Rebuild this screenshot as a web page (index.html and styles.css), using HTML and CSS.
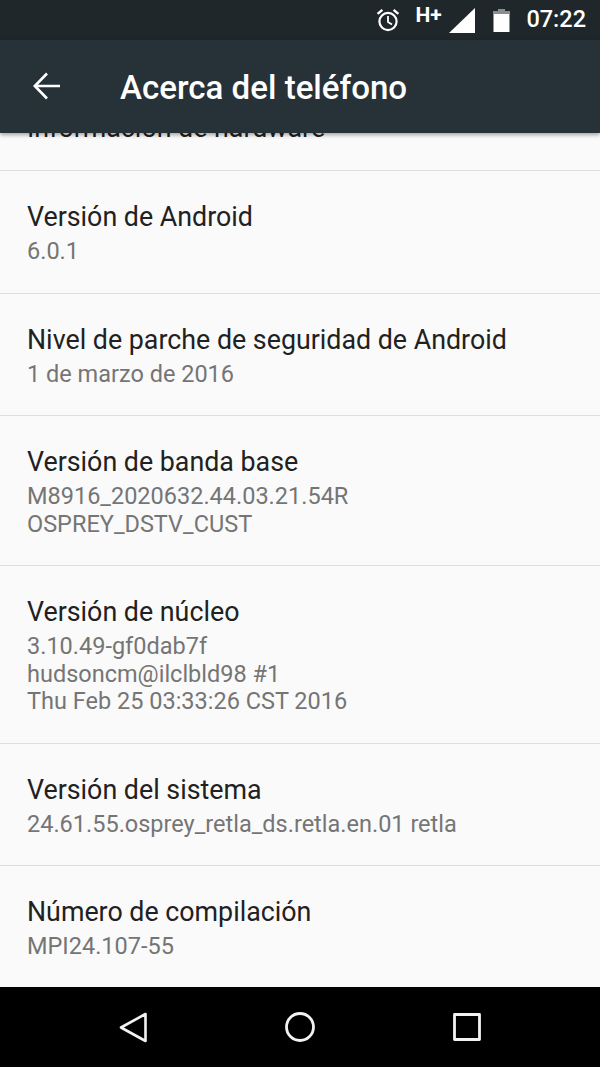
FILE: index.html
```html
<!DOCTYPE html>
<html lang="es">
<head>
<meta charset="utf-8">
<title>Acerca del teléfono</title>
<link rel="stylesheet" href="styles.css">
</head>
<body>
<div class="screen">
  <div class="status">
    <svg class="ic-alarm" width="26" height="26" viewBox="0 0 26 26" fill="none" stroke="#fff">
      <circle cx="13" cy="14.500" r="8.600" stroke-width="2.200"/>
      <path d="M13 9v6l4 2.600" stroke-width="1.800"/>
      <path d="M2.600 6.800 7.400 2.800M23.400 6.800 18.600 2.800" stroke-width="2.400"/>
    </svg>
    <span class="hplus">H+</span>
    <svg class="ic-signal" width="26" height="25" viewBox="0 0 26 25"><path d="M26 0v25H0z" fill="#fff"/></svg>
    <svg class="ic-batt" width="17" height="23" viewBox="0 0 17 23"><path d="M5.500 0h6v2h5v21H.5V2h5z" fill="#fff"/><path d="M5.500 0h6v2h5v3H.5V2h5z" fill="#8a8d8f"/></svg>
    <span class="clock">07:22</span>
  </div>
  <header class="appbar">
    <svg class="ic-back" width="28" height="28" viewBox="0 0 28 28" fill="none" stroke="#fff" stroke-width="2.600"><path d="M27 14H2M14 1.500 1.800 14 14 26.500"/></svg>
    <h1 class="title">Acerca del teléfono</h1>
  </header>
  <main class="list">
    <div class="row row-clipped"><div class="name">Información de hardware</div></div>
    <div class="row"><div class="name">Versión de Android</div><div class="val">6.0.1</div></div>
    <div class="row"><div class="name">Nivel de parche de seguridad de Android</div><div class="val">1 de marzo de 2016</div></div>
    <div class="row"><div class="name">Versión de banda base</div><div class="val">M8916_2020632.44.03.21.54R<br>OSPREY_DSTV_CUST</div></div>
    <div class="row"><div class="name">Versión de núcleo</div><div class="val">3.10.49-gf0dab7f<br>hudsoncm@ilclbld98 #1<br>Thu Feb 25 03:33:26 CST 2016</div></div>
    <div class="row"><div class="name">Versión del sistema</div><div class="val">24.61.55.osprey_retla_ds.retla.en.01 retla</div></div>
    <div class="row row-last"><div class="name">Número de compilación</div><div class="val">MPI24.107-55</div></div>
  </main>
  <nav class="navbar">
    <svg width="28" height="31" viewBox="0 0 28 31" fill="none" stroke="#f2f2f2" stroke-width="2.600" stroke-linejoin="round"><path d="M26.500 2v27L2 15.500z"/></svg>
    <svg width="30" height="30" viewBox="0 0 30 30" fill="none" stroke="#f2f2f2" stroke-width="2.800"><circle cx="15" cy="15" r="13.500"/></svg>
    <svg width="28" height="28" viewBox="0 0 28 28" fill="none" stroke="#f2f2f2" stroke-width="2.800" stroke-linejoin="round"><rect x="1.500" y="1.500" width="25" height="25"/></svg>
  </nav>
</div>
</body>
</html>
```
FILE: styles.css
```css
* { box-sizing: border-box; }
html, body { margin: 0; padding: 0; }
body { font-family: Roboto, "Liberation Sans", sans-serif; background: #fafafa; }
.screen { width: 600px; height: 1067px; display: flex; flex-direction: column; overflow: hidden; background: #fafafa; }

.status { flex: 0 0 40px; background: #20272b; display: flex; align-items: center; justify-content: flex-end; color: #fff; padding-right: 14px; }
.ic-alarm { margin-right: 14px; margin-top: -1px; flex: none; }
.hplus { font-size: 21px; font-weight: 700; margin-right: 6px; margin-top: -10px; line-height: 1; width: 28px; white-space: nowrap; }
.ic-signal { margin-right: 18px; margin-top: 1px; flex: none; }
.ic-batt { margin-right: 16px; flex: none; }
.clock { font-size: 23.500px; font-weight: 500; line-height: 1; }

.appbar { flex: 0 0 93px; background: #263238; display: flex; align-items: center; padding-left: 33px; position: relative; z-index: 2; box-shadow: 0 2px 4px rgba(0,0,0,.35); }
.ic-back { flex: none; margin-right: 59px; margin-top: -1px; }
.title { margin: 0; font-size: 33.100px; font-weight: 500; color: #fff; line-height: 1; margin-top: 3px; white-space: nowrap; }

.list { flex: 1; min-height: 0; overflow: hidden; }
.row { padding: 27px 27px 27px; border-bottom: 1px solid #dedede; }
.row-clipped { margin-top: -24px; padding-top: 0; height: 62px; padding-bottom: 0; }
.row-last { border-bottom: 0; }
.name { font-size: 26.800px; line-height: 38px; color: #212121; white-space: nowrap; }
.val { font-size: 23.500px; line-height: 27.500px; color: #757575; margin-top: 2px; white-space: nowrap; }

.navbar { flex: 0 0 80px; background: #000; display: flex; align-items: center; justify-content: center; gap: 138px; }
```
